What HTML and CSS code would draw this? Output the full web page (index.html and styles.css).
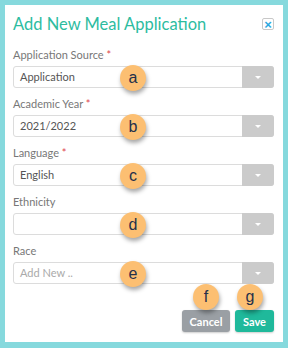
FILE: index.html
```html
<!DOCTYPE html>
<html lang="en">
<head>
    <meta charset="UTF-8">
    <meta name="viewport" content="width=device-width, initial-scale=1.0">
    <title>Add New Meal Application</title>
    <link rel="stylesheet" href="styles.css">
</head>
<body>
    <div class="modal">
        <div class="modal-header">
            <h1>Add New Meal Application</h1>
            <button class="close-btn">&times;</button>
        </div>

        <div class="field">
            <label>Application Source <span class="req">*</span></label>
            <div class="select">
                <span class="value">Application</span>
                <span class="arrow"></span>
                <span class="badge">a</span>
            </div>
        </div>

        <div class="field">
            <label>Academic Year <span class="req">*</span></label>
            <div class="select">
                <span class="value">2021/2022</span>
                <span class="arrow"></span>
                <span class="badge">b</span>
            </div>
        </div>

        <div class="field">
            <label>Language <span class="req">*</span></label>
            <div class="select">
                <span class="value">English</span>
                <span class="arrow"></span>
                <span class="badge">c</span>
            </div>
        </div>

        <div class="field">
            <label>Ethnicity</label>
            <div class="select">
                <span class="value"></span>
                <span class="arrow"></span>
                <span class="badge">d</span>
            </div>
        </div>

        <div class="field">
            <label>Race</label>
            <div class="select">
                <span class="value placeholder">Add New ..</span>
                <span class="arrow"></span>
                <span class="badge">e</span>
            </div>
        </div>

        <div class="actions">
            <button class="btn btn-cancel">Cancel<span class="badge badge-top">f</span></button>
            <button class="btn btn-save">Save<span class="badge badge-top badge-g">g</span></button>
        </div>
    </div>
</body>
</html>
```

FILE: styles.css
```css
body {
    margin: 0;
    padding: 0;
    background-color: #86d9dd;
    font-family: Lato, "Open Sans", Arial, sans-serif;
}
.modal {
    margin: 5px;
    width: 278px;
    height: 337px;
    box-sizing: border-box;
    padding: 0 9px 0 8px;
    background-color: white;
}
.modal-header {
    display: flex;
    justify-content: space-between;
    align-items: flex-start;
    height: 43px;
    padding-top: 8px;
    box-sizing: border-box;
}
.modal-header h1 {
    margin: 0;
    font-size: 16.5px;
    font-weight: normal;
    line-height: 22px;
    color: #2dbc9f;
}
.close-btn {
    margin-top: 5px;
    width: 12px;
    height: 12px;
    padding: 0;
    border: 1px solid #c8c8c8;
    border-radius: 2px;
    background: white;
    color: #2fa9df;
    font-family: Arial, sans-serif;
    font-size: 13px;
    font-weight: bold;
    line-height: 9px;
    text-align: center;
}
.field {
    margin-bottom: 9px;
}
.field label {
    display: block;
    font-size: 11px;
    line-height: 14px;
    color: #777;
    margin-bottom: 4px;
}
.req {
    color: #e0474c;
}
.select {
    position: relative;
    display: flex;
    height: 22px;
    box-sizing: border-box;
    border: 1px solid #dcdcdc;
    border-radius: 3px;
}
.value {
    flex: 1;
    padding-left: 6px;
    font-size: 11px;
    line-height: 20px;
    color: #555;
}
.value.placeholder {
    color: #aaa;
}
.arrow {
    position: relative;
    width: 32px;
    margin: -1px -1px -1px 0;
    background-color: #cbcbcb;
    border-radius: 0 3px 3px 0;
}
.arrow::after {
    content: "";
    position: absolute;
    left: 13px;
    top: 10px;
    border-left: 3px solid transparent;
    border-right: 3px solid transparent;
    border-top: 3px solid white;
}
.badge {
    position: absolute;
    left: 106px;
    top: -2px;
    width: 26px;
    height: 26px;
    border-radius: 50%;
    background-color: #fcbf72;
    color: #24304a;
    font-family: Arial, sans-serif;
    font-size: 16px;
    line-height: 25px;
    text-align: center;
    box-shadow: 1px 3px 4px rgba(0, 0, 0, 0.35);
}
.actions {
    display: flex;
    justify-content: flex-end;
    gap: 5px;
    margin-top: 26px;
}
.btn {
    position: relative;
    height: 22px;
    padding: 0;
    border: none;
    border-radius: 3px;
    color: white;
    font-family: Lato, Arial, sans-serif;
    font-size: 11px;
    font-weight: bold;
    box-shadow: 0 1px 2px rgba(0, 0, 0, 0.2);
}
.btn-cancel {
    width: 48px;
    background-color: #9a9fa4;
}
.btn-save {
    width: 39px;
    background-color: #1fb99b;
}
.badge-top {
    left: 11px;
    top: -26px;
    font-weight: normal;
}
.badge-g {
    left: 2px;
}
```
